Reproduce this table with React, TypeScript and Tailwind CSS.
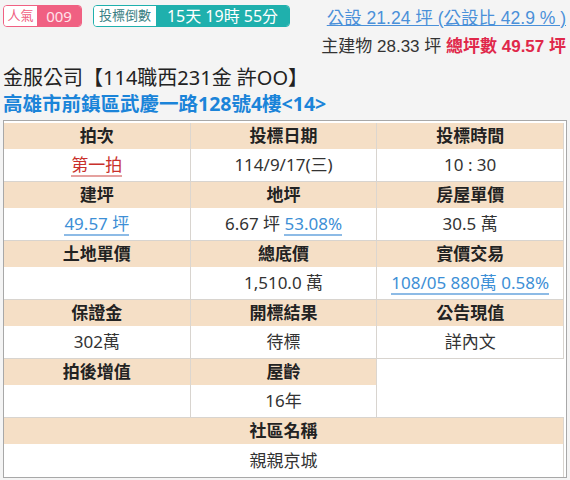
import React from "react";

const F = { fontFamily: '"Noto Sans", "Noto Sans CJK TC", sans-serif' };

function H({ children, span }: { children?: React.ReactNode; span?: string }) {
  return (
    <div className={`h-[26px] flex items-center justify-center bg-[#f5dfc6] font-bold text-[17px] text-[#222] border-r border-[#dcd6cf] ${span ?? ""}`}>
      {children}
    </div>
  );
}
function D({ children, span }: { children?: React.ReactNode; span?: string }) {
  return (
    <div className={`h-[33px] flex items-center justify-center bg-white text-[17px] text-[#333] border-r border-b border-[#d8d4cf] ${span ?? ""}`}>
      {children}
    </div>
  );
}
const Link = ({ children }: { children: React.ReactNode }) => (
  <span className="text-[#3d8fd6] border-b-2 border-[#8dbbe6] leading-[21px]">{children}</span>
);

export default function App() {
  return (
    <div className="w-[570px] h-[480px] bg-[#f4f4f4] overflow-hidden relative" style={F}>
      <div className="flex justify-between pl-[3px] pr-[4px] pt-[5px]">
        <div className="flex gap-[11px]">
          <div className="flex h-[22px] rounded-[4px] border border-[#f06082] overflow-hidden">
            <div className="w-[33px] bg-white text-[#f06082] text-[13px] flex items-center justify-center">人氣</div>
            <div className="w-[44px] bg-[#f06082] text-[#ffe3ea] text-[15px] flex items-center justify-center">009</div>
          </div>
          <div className="flex h-[22px] rounded-[4px] border border-[#1fb0ad] overflow-hidden">
            <div className="w-[62px] bg-white text-[#3a7f84] text-[13px] flex items-center justify-center">投標倒數</div>
            <div className="w-[133px] bg-[#1fb0ad] text-white text-[16px] flex items-center justify-center">15天 19時 55分</div>
          </div>
        </div>
        <div className="flex flex-col items-end" style={{ fontFamily: '"Liberation Sans", "Noto Sans CJK TC", sans-serif' }}>
          <div className="text-[17.5px] text-[#4a90d9] underline leading-[22px] mt-[2px]">公設 21.24 坪 (公設比 42.9 % )</div>
          <div className="text-[17px] text-[#333] leading-[22px] mt-[7px]">
            主建物 28.33 坪 <span className="text-[#e0284a] font-bold">總坪數 49.57 坪</span>
          </div>
        </div>
      </div>
      <div className="pl-[3px] mt-[7px]">
        <div className="text-[20px] text-[#222] leading-[26px]">金服公司【114職西231金 許OO】</div>
        <div className="text-[19.5px] text-[#1b84d9] font-bold leading-[26px]">高雄市前鎮區武慶一路128號4樓&lt;14&gt;</div>
      </div>
      <div className="mx-[3px] mt-[3px] w-[564px] border border-[#a8a8a8] bg-white pt-[2px] pr-[2px]">
        <div className="grid grid-cols-3">
          <H>拍次</H>
          <H>投標日期</H>
          <H>投標時間</H>
          <D><span className="text-[#c9302c] border-b-2 border-[#e5a19f] leading-[21px]">第一拍</span></D>
          <D>114/9/17(三)</D>
          <D>10 : 30</D>
          <H>建坪</H>
          <H>地坪</H>
          <H>房屋單價</H>
          <D><Link>49.57 坪</Link></D>
          <D><span>6.67 坪&nbsp;</span><Link>53.08%</Link></D>
          <D>30.5 萬</D>
          <H>土地單價</H>
          <H>總底價</H>
          <H>實價交易</H>
          <D></D>
          <D>1,510.0 萬</D>
          <D><Link>108/05 880萬 0.58%</Link></D>
          <H>保證金</H>
          <H>開標結果</H>
          <H>公告現值</H>
          <D>302萬</D>
          <D>待標</D>
          <D>詳內文</D>
          <H>拍後增值</H>
          <H>屋齡</H>
          <div className="row-span-2 bg-white border-b border-[#d8d4cf]"></div>
          <D></D>
          <D>16年</D>
          <H span="col-span-3">社區名稱</H>
          <D span="col-span-3 border-b-0">親親京城</D>
        </div>
      </div>
    </div>
  );
}
